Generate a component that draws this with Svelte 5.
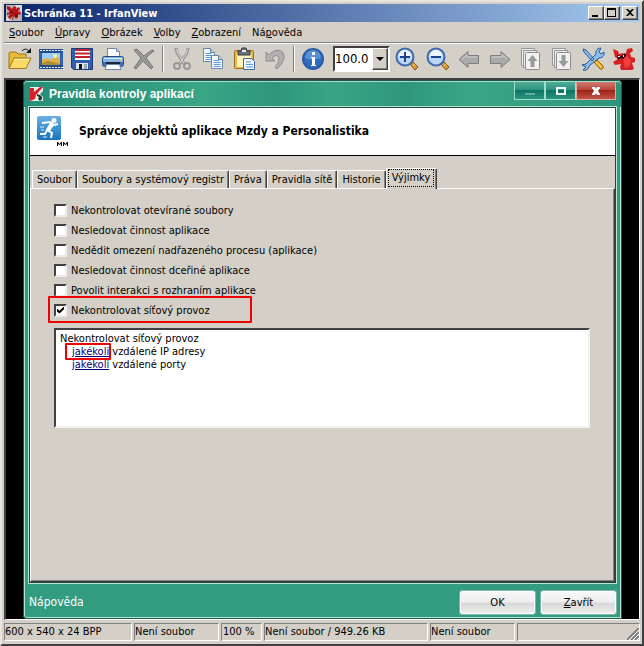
<script lang="ts">
    const menu = [
        ["", "S", "oubor"],
        ["", "Ú", "pravy"],
        ["", "O", "brázek"],
        ["", "V", "olby"],
        ["", "Z", "obrazení"],
        ["Ná", "p", "ověda"],
    ]

    const tabs = ["Soubor", "Soubory a systémový registr", "Práva", "Pravidla sítě", "Historie", "Výjimky"]
    let active = $state("Výjimky")

    let rules = $state([
        { label: "Nekontrolovat otevírané soubory", checked: false, marked: false },
        { label: "Nesledovat činnost aplikace", checked: false, marked: false },
        { label: "Nedědit omezení nadřazeného procesu (aplikace)", checked: false, marked: false },
        { label: "Nesledovat činnost dceřiné aplikace", checked: false, marked: false },
        { label: "Povolit interakci s rozhraním aplikace", checked: false, marked: false },
        { label: "Nekontrolovat síťový provoz", checked: true, marked: true },
    ])
</script>

{#snippet page(x: number, y: number)}
    <path d="M{x} {y}h7l4 4v9h-11z" fill="#f4f8fd" stroke="#6f87a8" />
    <path d="M{x + 7} {y}v4h4" fill="#b8cbe2" stroke="#6f87a8" />
    <path d="M{x + 2} {y + 5}h6M{x + 2} {y + 7}h7M{x + 2} {y + 9}h7M{x + 2} {y + 11}h7" stroke="#5b9be0" />
{/snippet}

{#snippet lens()}
    <path d="M15 17l3-2 5 5-3 3z" fill="#dd9a2c" stroke="#7d5418" />
    <path d="M18 19l2-2" stroke="#ffd983" />
    <circle cx="10" cy="10" r="8.5" fill="#b9d8fa" stroke="#4468ad" stroke-width="2" />
    <path d="M4 9a6 6 0 0 1 12 0z" fill="#eef7ff" />
    <path d="M5 10h10" stroke="#1f3f88" stroke-width="2" />
{/snippet}

{#snippet stack()}
    <path d="M2.500 1.500h13v17h-13z" fill="#eee" stroke="#969696" />
    <path d="M4.500 3.500h13v17h-13z" fill="#eee" stroke="#969696" />
    <rect x="6.500" y="5.500" width="14" height="17" rx="1" fill="#f1f1f1" stroke="#8d8d8d" />
{/snippet}

<div class="window">
    <header class="caption">
        <svg class="logo" viewBox="0 0 16 16">
            <path d="M0 0h16v16H0z" fill="#b7b2b0" />
            <path d="M9 0h7v7zM0 11l5 5H0z" fill="#dedad7" />
            <path d="M1 1l3 1 2 2 2-3 2 1v2l3-2 1 2-2 2 3 2-1 2-3-1 1 3-2 2-2-3-1 4H6l1-4-3 3-2-2 2-3-3 1V8l3-1-3-3z" fill="#b71418" />
            <path d="M4 6h3v2H4zM9 9h3v3H9z" fill="#701014" />
        </svg>
        <h1>Schránka 11 - IrfanView</h1>
        <button class="sys" aria-label="Minimalizovat">
            <svg viewBox="0 0 12 10"><path d="M2 7h6v2H2z" /></svg>
        </button>
        <button class="sys" aria-label="Maximalizovat">
            <svg viewBox="0 0 12 10"><path d="M1 0h9v9H1zM2 2v6h7V2z" fill-rule="evenodd" /></svg>
        </button>
        <button class="sys last" aria-label="Zavřít okno">
            <svg viewBox="0 0 12 10"><path d="M2 1h2l2 2 2-2h2L7 4.500 10 8H8L6 6 4 8H2l3-3.500z" /></svg>
        </button>
    </header>

    <nav class="menu">
        {#each menu as [pre, key, rest]}
            <button>{pre}<u>{key}</u>{rest}</button>
        {/each}
    </nav>

    <div class="toolbar">
        <button aria-label="Otevřít">
            <svg viewBox="0 0 24 24">
                <path d="M1 21V6l1-1h6l2 2h8v3" fill="#e9b93a" stroke="#9b7419" />
                <path d="M1 21.500L6 11h17l-5 10.500z" fill="#fbd964" stroke="#a27a1d" />
                <path d="M6.500 12.500h14" stroke="#fff2a8" />
                <path d="M14 4c3-3 5-2 7 0" fill="none" stroke="#111" />
                <path d="M23 1v5h-5z" fill="#111" />
            </svg>
        </button>
        <button aria-label="Prezentace">
            <svg viewBox="0 0 24 24">
                <path d="M0 2h24v20H0z" fill="#264d8c" />
                <path d="M1 3.500h23M1 20.500h23" stroke="#e6f0ff" stroke-dasharray="2 1" />
                <path d="M0 6h24v12H0z" fill="#2e62ab" />
                <path d="M3 6h18v12H3z" fill="#9dccf5" />
                <path d="M3 13l5-2 4 2 5-4 4 4v5H3z" fill="#e3b040" />
                <path d="M3 16l6-2 12 3v1H3z" fill="#ad8b37" />
                <circle cx="16" cy="9" r="2" fill="#fff3a4" />
            </svg>
        </button>
        <button aria-label="Uložit">
            <svg viewBox="0 0 24 24">
                <path d="M1.500 1.500h21v21h-19l-2-2z" fill="#315fae" stroke="#1b3a78" />
                <path d="M5 2h15v11H5z" fill="#fff" />
                <path d="M5 3h15M5 6.500h15M5 10h15" stroke="#c2202c" stroke-width="2" />
                <path d="M6 16h12v6H6z" fill="#e2e6ec" />
                <path d="M9 17h3v5H9z" fill="#111" />
                <path d="M14 17h3v5h-3z" fill="#9ca6b5" />
            </svg>
        </button>
        <button aria-label="Tisk">
            <svg viewBox="0 0 24 24">
                <path d="M6.500 10V1.500h9l3 3V10" fill="#fff" stroke="#7087a9" />
                <path d="M15.500 1.500v3h3" fill="#cbd9ec" stroke="#7087a9" />
                <rect x="1.500" y="9.500" width="21" height="10" rx="2" fill="#83b3e8" stroke="#23477f" />
                <path d="M3 11.500h18" stroke="#d6e9ff" />
                <path d="M2 15h20v4H2z" fill="#3c6dba" />
                <path d="M5 15h14v2H5z" fill="#1c2430" />
                <path d="M5.500 17.500h13l1.500 5H4z" fill="#fff" stroke="#7087a9" />
                <path d="M19 12h2v2h-2z" fill="#ffc040" />
            </svg>
        </button>
        <button aria-label="Smazat">
            <svg viewBox="0 0 24 24">
                <path d="M2 3l3-1 7 7c3-3 6-5 9-6l1 1c-3 2-5 4-8 7l7 9-2 2-8-8-7 8-2-1 7-10z" fill="#979797" stroke="#777" />
            </svg>
        </button>
        <span class="sep"></span>
        <button aria-label="Vyjmout">
            <svg viewBox="0 0 24 24">
                <path d="M6 1l1 5 8 12M18 1l-1 5-8 12" fill="none" stroke="#999" stroke-width="3" />
                <path d="M6.500 2l1 4 7 11M17.500 2l-1 4-7 11" fill="none" stroke="#d8d8d8" />
                <circle cx="7" cy="19" r="3" fill="none" stroke="#999" stroke-width="2" />
                <circle cx="17" cy="19" r="3" fill="none" stroke="#999" stroke-width="2" />
            </svg>
        </button>
        <button aria-label="Kopírovat">
            <svg viewBox="0 0 24 24">
                {@render page(2.5, 1.5)}
                {@render page(10.5, 8.5)}
            </svg>
        </button>
        <button aria-label="Vložit">
            <svg viewBox="0 0 24 24">
                <rect x="2.500" y="3.500" width="19" height="18" rx="1" fill="#eebb43" stroke="#9a6d18" />
                <path d="M5 6h14v14H5z" fill="#fff4c2" />
                <path d="M6 4h3l1-3h4l1 3h3v4H6z" fill="#68727e" stroke="#30353c" />
                <path d="M10 3h4v2h-4z" fill="#e5e9ee" />
                <path d="M11.500 11.500h8l3 3v8h-11z" fill="#eff6ff" stroke="#3e69ad" />
                <path d="M14 15h5M14 17.500h7M14 20h7" stroke="#5b9be0" />
            </svg>
        </button>
        <button aria-label="Zpět">
            <svg viewBox="0 0 24 24">
                <path d="M3 5l3 3c5-6 12-6 14-2 3 5-1 11-6 16l-2-2c4-5 5-9 3-11-2-1-4 0-6 2l3 3H3z" fill="#b0b0b0" stroke="#8c8c8c" />
            </svg>
        </button>
        <span class="sep"></span>
        <button aria-label="Informace">
            <svg viewBox="0 0 24 24">
                <circle cx="12" cy="12" r="10" fill="#2d6cc0" stroke="#2a5ba6" stroke-width="2" />
                <path d="M4 11a8 8 0 0 1 16 0c-5 2-11 2-16 0z" fill="#5791d6" />
                <path d="M11 5h3v3h-3zM10 10h4v8h1v1h-5v-1h1v-7h-1z" fill="#fff" />
            </svg>
        </button>
        <div class="zoom">
            <input type="text" value="100.0" aria-label="Zvětšení" />
            <button class="drop" aria-label="Vybrat zvětšení"></button>
        </div>
        <button aria-label="Zvětšit">
            <svg viewBox="0 0 24 24">
                {@render lens()}
                <path d="M10 5v10" stroke="#1f3f88" stroke-width="2" />
            </svg>
        </button>
        <button aria-label="Zmenšit">
            <svg viewBox="0 0 24 24">{@render lens()}</svg>
        </button>
        <button aria-label="Předchozí soubor">
            <svg viewBox="0 0 24 24"><path d="M2 12.500l9-8v4h10.500v8H11v4z" fill="#aaa" stroke="#7e7e7e" /><path d="M5 12l5-4v2h10" fill="none" stroke="#d2d2d2" /></svg>
        </button>
        <button aria-label="Další soubor">
            <svg viewBox="0 0 24 24"><path d="M22 12.500l-9-8v4H2.500v8H13v4z" fill="#aaa" stroke="#7e7e7e" /><path d="M19 12l-5-4v2H4" fill="none" stroke="#d2d2d2" /></svg>
        </button>
        <button aria-label="Předchozí strana">
            <svg viewBox="0 0 24 24">{@render stack()}<path d="M13.500 8l5 6h-3v6h-4v-6h-3z" fill="#999" /></svg>
        </button>
        <button aria-label="Další strana">
            <svg viewBox="0 0 24 24">{@render stack()}<path d="M13.500 20l5-6h-3V8h-4v6h-3z" fill="#999" /></svg>
        </button>
        <button aria-label="Nastavení">
            <svg viewBox="0 0 24 24">
                <path d="M2 2l3 1 8 9-2 2-8-9zM1 18l4-1 10-10c-1-4 2-6 5-6l-2 4 2 2 3-2c1 4-2 6-5 6L8 19c0 3-3 5-6 4l3-3z" fill="#8cbcec" stroke="#27569c" />
                <path d="M13 15l3-2 6 6c1 2-1 4-3 3z" fill="#f0b029" stroke="#8f5c10" />
                <path d="M15 15l5 5" stroke="#ffe38b" />
            </svg>
        </button>
        <button aria-label="O programu">
            <svg viewBox="0 0 24 24">
                <path d="M1 2l5 2 1 3 4-1 1 2 2-2 1-4 5-1 1 3-3 2 1 4 4 1v4l-3 1 2 6-3 1H9l-1-3 1-3-6 1-2-3 5-3-3-2-1-4z" fill="#d72024" />
                <path d="M11 11l4-2 4 4-1 6-5 2z" fill="#f1403c" />
                <path d="M5 8l4 1 4-3 1 3-3 3-2-1-3 2z" fill="#260a0b" />
                <path d="M6 9h2v1H6zM11 8h1v2h-1z" fill="#eee" />
            </svg>
        </button>
    </div>

    <main class="client">
        <section class="dialog">
            <header class="dialog-title">
                <svg class="kav" viewBox="0 0 16 16">
                    <path d="M1 1h13v4l-3 3 3 3v4H1z" fill="#e9efec" />
                    <path d="M1 2h4v4l6-5h3L7 9l-1 4-5 2z" fill="#d8202b" />
                    <path d="M8 8l3 1 2 2v2l-2 2-2-2 1-2-2-1z" fill="#23352e" />
                </svg>
                <h2>Pravidla kontroly aplikací</h2>
                <div class="winctl">
                    <button aria-label="Minimalizovat dialog"><svg viewBox="0 0 12 12"><path d="M1 8h10v2H1z" fill="#68aa9c" /></svg></button>
                    <button aria-label="Maximalizovat dialog"><svg viewBox="0 0 12 12"><path d="M2 3h8v6H2z" fill="none" stroke="#f2f7f5" stroke-width="2" /></svg></button>
                    <button class="close" aria-label="Zavřít dialog"><svg viewBox="0 0 12 12"><path d="M2 2h3l1 2 1-2h3v1L8 6l2 3v1H7L6 8l-1 2H2V9l2-3-2-3z" fill="#fff" /></svg></button>
                </div>
            </header>

            <div class="body">
                <div class="banner">
                    <svg viewBox="0 0 32 32">
                        <defs>
                            <linearGradient id="app-blue" x2="0" y2="1">
                                <stop offset="0" stop-color="#6bb0e2" />
                                <stop offset="1" stop-color="#1875bd" />
                            </linearGradient>
                        </defs>
                        <rect width="24" height="24" rx="2" fill="url(#app-blue)" />
                        <circle cx="17" cy="4.500" r="2.500" fill="#fff" />
                        <path d="M5 7l8-1 4 3 4-1M14 8l-4 6 5 3-1 5M10 14l-2 4H3" fill="none" stroke="#fff" stroke-width="2" />
                        <path d="M13 7l-4 7 4 1 4-6z" fill="#fff" />
                        <path d="M3 11h4M4 14h3M6 21h4" stroke="#d3ebfb" />
                        <path d="M20 30v-4h1l1.500 2 1.500-2h1v4h-1v-2l-1.500 1-1.500-1v2zM26 30v-4h1l1.500 2 1.500-2h1v4h-1v-2l-1.500 1-1.500-1v2z" fill="#111" />
                    </svg>
                    <h3>Správce objektů aplikace Mzdy a Personalistika</h3>
                </div>

                <div class="tabs" role="tablist">
                    {#each tabs as tab}
                        <button role="tab" aria-selected={tab === active} class:active={tab === active} onclick={() => (active = tab)}>
                            <span>{tab}</span>
                        </button>
                    {/each}
                </div>

                <div class="panel">
                    <div class="rules">
                        {#each rules as rule}
                            <label class:marked={rule.marked}>
                                <input type="checkbox" bind:checked={rule.checked} />
                                {rule.label}
                            </label>
                        {/each}
                    </div>

                    <div class="detail">
                        <p>Nekontrolovat síťový provoz</p>
                        <p class="sub"><a class="marked" href="#ip">jakékoli</a> vzdálené IP adresy</p>
                        <p class="sub"><a href="#porty">jakékoli</a> vzdálené porty</p>
                    </div>
                </div>
            </div>

            <footer class="actions">
                <a href="#napoveda">Nápověda</a>
                <button>OK</button>
                <button><u>Z</u>avřít</button>
            </footer>
        </section>
    </main>

    <footer class="status">
        <span class="size">600 x 540 x 24 BPP</span>
        <span class="file">Není soubor</span>
        <span class="pct">100 %</span>
        <span class="mem">Není soubor / 949.26 KB</span>
        <span class="file">Není soubor</span>
        <span class="rest">
            <svg viewBox="0 0 12 12"><path d="M0 12L12 0M4 12l8-8M8 12l4-4" stroke="#808080" stroke-width="2" /><path d="M2 12L12 2M6 12l6-6M10 12l2-2" stroke="#fff" /></svg>
        </span>
    </footer>
</div>

<style>
    :global(body) {
        margin: 0;
    }

    .window {
        --face: #d4d0c8;
        --shadow: #808080;
        --dark: #404040;

        box-sizing: border-box;
        min-height: 100vh;
        display: flex;
        flex-direction: column;
        padding: 2px;
        border: 2px solid;
        border-color: #e8e5df var(--dark) var(--dark) #e8e5df;
        background: var(--face);
        color: #000;
        font-family: "DejaVu Sans Condensed", "DejaVu Sans", sans-serif;
        font-size: 11px;
        line-height: 13px;
    }

    button,
    input {
        font: inherit;
        color: inherit;
        margin: 0;
        padding: 0;
        border: 0;
        background: none;
        box-sizing: border-box;
    }

    h1,
    h2,
    h3,
    p {
        margin: 0;
    }

    svg {
        display: block;
    }

    .caption {
        display: flex;
        align-items: center;
        height: 18px;
        padding: 0 2px;
        background: linear-gradient(to right, #0a246a, #a6caf0);
        color: #fff;
    }

    .logo {
        width: 16px;
        height: 16px;
    }

    .caption h1 {
        flex: 1;
        margin-left: 2px;
        font-size: 11px;
    }

    .sys {
        display: grid;
        place-items: center;
        width: 16px;
        height: 14px;
        background: var(--face);
        border: 1px solid;
        border-color: #fff var(--dark) var(--dark) #fff;
        box-shadow: inset -1px -1px var(--shadow);
    }

    .sys svg {
        width: 12px;
        height: 10px;
    }

    .last {
        margin-left: 2px;
    }

    .menu {
        display: flex;
        height: 20px;
        border-bottom: 1px solid var(--shadow);
    }

    .menu button {
        padding: 0 6px 0 5px;
    }

    .toolbar {
        display: flex;
        align-items: center;
        height: 30px;
        padding-bottom: 4px;
        border-top: 1px solid #fff;
    }

    .toolbar > button {
        display: grid;
        place-items: center;
        flex: 0 0 31px;
        height: 28px;
    }

    .toolbar > button svg {
        width: 24px;
        height: 24px;
    }

    .sep {
        flex: 0 0 2px;
        height: 26px;
        margin: 0 2px 0 3px;
        box-sizing: border-box;
        border-left: 1px solid var(--shadow);
        border-right: 1px solid #fff;
    }

    .zoom {
        display: flex;
        flex: 0 0 57px;
        min-width: 0;
        height: 26px;
        margin: 0 1px 0 5px;
        box-sizing: border-box;
        background: #fff;
        border: 2px solid;
        border-color: var(--dark) #fff #fff var(--dark);
    }

    .zoom input {
        flex: 1;
        width: 0;
        min-width: 0;
        height: 20px;
        font-size: 13px;
        outline: none;
    }

    .drop {
        display: grid;
        place-items: center;
        flex: 0 0 16px;
        background: var(--face);
        border: 1px solid;
        border-color: #fff var(--dark) var(--dark) #fff;
        box-shadow: inset -1px -1px var(--shadow);
    }

    .drop::before {
        content: "";
        border: 4px solid transparent;
        border-top-color: #000;
        border-bottom: 0;
    }

    .client {
        flex: 1;
        display: flex;
        padding: 0 17px;
        background: #000;
        border: 2px solid;
        border-color: var(--dark) #fff #fff var(--dark);
        border-right-width: 1px;
        border-bottom-width: 1px;
    }

    .dialog {
        flex: 1;
        display: flex;
        flex-direction: column;
        padding: 0 5px;
        background: #329b80;
        border: 1px solid #a8dfce;
        border-radius: 4px 4px 0 4px;
        outline: 1px solid #1b5747;
        outline-offset: -1px;
        box-shadow: inset 0 0 0 1px #b5e5d6;
    }

    .dialog-title {
        display: flex;
        height: 25px;
        margin: 0 -5px;
        padding-left: 5px;
        background: linear-gradient(to right, #268d78, #339c80 20%, #3aa685 30%, #2f967c 42%, #3aa483 52%, #2f967c 64%, #3ba685 75%, #2d947b);
        border-top: 1px solid #a8dfce;
        border-radius: 4px 4px 0 0;
        color: #fff;
    }

    .kav {
        width: 16px;
        height: 16px;
        margin-top: 4px;
    }

    .dialog-title h2 {
        flex: 1;
        margin: 5px 0 0 4px;
        font: bold 12px / 15px "Liberation Sans", Arial, sans-serif;
    }

    .winctl {
        display: flex;
        height: 18px;
        margin-right: 5px;
    }

    .winctl button {
        display: grid;
        place-items: center;
        width: 31px;
        background: linear-gradient(#4fac97, #2f9580 45%, #0b7564 50%, #2c9581);
        border: 1px solid #a0dccb;
        border-top: 0;
    }

    .winctl svg {
        width: 12px;
        height: 12px;
    }

    .winctl .close {
        width: 40px;
        background: linear-gradient(#ce7a70, #b9483c 45%, #9c2416 50%, #c25548);
        border-color: #e3a8a4;
    }

    .body {
        flex: 1;
        display: flex;
        flex-direction: column;
        background: var(--face);
        border: 1px solid #24453b;
        outline: 1px solid #b5e5d6;
    }

    .banner {
        display: flex;
        align-items: center;
        height: 47px;
        padding-left: 7px;
        background: #fff;
        border-bottom: 1px solid #000;
    }

    .banner svg {
        width: 32px;
        height: 32px;
    }

    .banner h3 {
        margin-left: 10px;
        font-size: 12px;
    }

    .tabs {
        display: flex;
        align-items: flex-end;
        height: 20px;
        margin-top: 12px;
        padding-left: 2px;
    }

    .tabs button {
        height: 18px;
        padding: 0 4px;
        border: 1px solid;
        border-color: #fff var(--dark) transparent #fff;
        border-bottom: 0;
        border-radius: 2px 2px 0 0;
        box-shadow: inset -1px 0 var(--shadow);
    }

    .tabs .active {
        position: relative;
        height: 21px;
        margin-bottom: -1px;
        padding: 0 2px 2px 1px;
        background: var(--face);
    }

    .tabs .active span {
        display: block;
        padding: 1px 3px 2px;
        border: 1px dotted #000;
    }

    .panel {
        flex: 1;
        padding: 11px 24px 12px 23px;
        border: 1px solid;
        border-color: #fff var(--dark) var(--dark) #fff;
        box-shadow: inset -1px -1px var(--shadow);
    }

    .rules {
        display: flex;
        flex-direction: column;
        align-items: flex-start;
    }

    .rules label {
        position: relative;
        display: flex;
        align-items: center;
        gap: 4px;
        height: 20px;
    }

    .rules .marked::after {
        content: "";
        position: absolute;
        inset: -4px -42px -3px -6px;
        border: 2px solid #f00000;
        border-radius: 1px;
    }

    .rules input {
        appearance: none;
        display: grid;
        place-items: center;
        width: 13px;
        height: 13px;
        background: #fff;
        border: 2px solid;
        border-color: var(--dark) #eeece8 #eeece8 var(--dark);
    }

    .rules input:checked::before {
        content: "";
        width: 7px;
        height: 7px;
        background: #000;
        clip-path: polygon(0 28%, 35% 60%, 100% 0, 100% 40%, 35% 100%, 0 70%);
    }

    .detail {
        height: 88px;
        margin-top: 8px;
        padding: 2px 4px 6px;
        background: #fff;
        border: 2px solid;
        border-color: var(--dark) #f3f1ed #f3f1ed var(--dark);
    }

    .sub {
        padding-left: 12px;
    }

    .detail a {
        color: #000080;
    }

    .detail .marked {
        position: relative;
    }

    .detail .marked::after {
        content: "";
        position: absolute;
        inset: -2px -2px -2px -7px;
        border: 2px solid #f00000;
        border-radius: 1px;
    }

    .actions {
        display: flex;
        align-items: center;
        gap: 6px;
        height: 31px;
        padding-top: 4px;
    }

    .actions a {
        flex: 1;
        color: #fff;
        text-decoration: none;
        font-size: 12px;
    }

    .actions button {
        width: 75px;
        height: 23px;
        background: linear-gradient(#f8f8f8, #eee 45%, #d9d9d9 55%, #ececec);
        border: 1px solid #fff;
        border-radius: 2px;
        box-shadow: 0 0 0 1px #7eb7a8;
    }

    .status {
        display: flex;
        gap: 2px;
        height: 18px;
        padding-top: 2px;
        padding-bottom: 1px;
        border-top: 1px solid var(--face);
        white-space: nowrap;
    }

    .status span {
        box-sizing: border-box;
        border: 1px solid;
        border-color: var(--shadow) #fff #fff var(--shadow);
        line-height: 16px;
    }

    .size {
        width: 128px;
    }

    .file {
        width: 85px;
    }

    .pct {
        width: 41px;
        padding-left: 1px;
    }

    .mem {
        width: 164px;
    }

    .rest {
        flex: 1;
        display: flex;
        justify-content: flex-end;
        align-items: flex-end;
    }

    .rest svg {
        width: 12px;
        height: 12px;
    }
</style>
